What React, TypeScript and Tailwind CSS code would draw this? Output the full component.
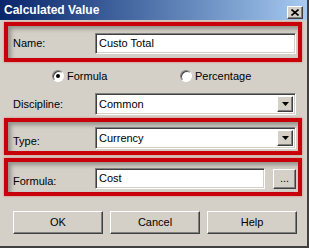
import { ReactNode } from "react";

const sunken =
  "bg-white border border-t-[#808080] border-l-[#808080] border-b-white border-r-white shadow-[inset_1px_1px_0_#404040,inset_-1px_-1px_0_#d4d0c8]";
const raised =
  "bg-[#d4d0c8] border border-t-white border-l-white border-b-[#404040] border-r-[#404040] shadow-[inset_-1px_-1px_0_#808080]";

const RedBox = ({ children, h }: { children: ReactNode; h: string }) => (
  <div
    className={`${h} border-4 border-[#c8000a] flex items-center pl-[5px] pr-[2px] pt-[3px] shadow-[inset_3px_3px_4px_rgba(0,0,0,0.3),0_0_2px_rgba(220,60,60,0.6)]`}
  >
    {children}
  </div>
);

const Select = ({ value }: { value: string }) => (
  <div className={`${sunken} w-[201px] h-[22px] flex items-center justify-between pl-[3px] pr-[2px]`}>
    <span>{value}</span>
    <div className={`${raised} w-[16px] h-[16px] flex items-center justify-center`}>
      <svg width="7" height="4" viewBox="0 0 7 4">
        <path d="M0 0h7L3.5 4z" fill="#000" />
      </svg>
    </div>
  </div>
);

const Radio = ({ checked, label, w }: { checked?: boolean; label: string; w: string }) => (
  <div className={`${w} flex items-center gap-[3px]`}>
    <div className="w-[12px] h-[12px] rounded-full bg-white border border-t-[#808080] border-l-[#808080] border-b-white border-r-white shadow-[inset_1px_1px_0_#404040] flex items-center justify-center">
      {checked && <div className="w-[4px] h-[4px] rounded-full bg-black" />}
    </div>
    <span>{label}</span>
  </div>
);

export default function App() {
  return (
    <div
      className="w-[309px] h-[248px] bg-[#d4d0c8] border-r-2 border-b-2 border-r-[#404040] border-b-[#404040] text-[11px] text-black flex flex-col overflow-hidden"
      style={{ fontFamily: "Tahoma, 'Liberation Sans', Arial, sans-serif" }}
    >
      {/* Title bar */}
      <div className="h-[20px] shrink-0 flex items-center justify-between pl-[4px] pr-[4px] bg-gradient-to-r from-[#0a246a] to-[#a6caf0]">
        <span className="text-white font-bold text-[12px]">Calculated Value</span>
        <div className={`${raised} w-[16px] h-[13px] mt-[5px] flex items-center justify-center`}>
          <svg width="8" height="7" viewBox="0 0 8 7">
            <path d="M0.5 0.5L7.5 6.5M7.5 0.5L0.5 6.5" stroke="#000" strokeWidth="1.6" />
          </svg>
        </div>
      </div>

      <div className="flex flex-col px-[4px] pr-[5px] pt-[2px]">
        <RedBox h="h-[40px]">
          <span className="w-[82px]">Name:</span>
          <div className={`${sunken} w-[201px] h-[21px] flex items-center pl-[3px]`}>Custo Total</div>
        </RedBox>

        <div className="h-[28px] flex items-center pl-[48px]">
          <Radio checked label="Formula" w="w-[128px]" />
          <Radio label="Percentage" w="w-[100px]" />
        </div>

        <div className="h-[28px] flex items-center pl-[9px] pr-[6px]">
          <span className="w-[82px]">Discipline:</span>
          <Select value="Common" />
        </div>

        <RedBox h="h-[37px]">
          <span className="w-[82px] mt-[6px]">Type:</span>
          <Select value="Currency" />
        </RedBox>

        <div className="mt-[3px]">
          <RedBox h="h-[38px]">
            <span className="w-[82px] mt-[6px]">Formula:</span>
            <div className={`${sunken} w-[170px] h-[21px] flex items-center pl-[3px]`}>Cost</div>
            <div className={`${raised} ml-[8px] w-[23px] h-[20px] flex items-center justify-center`}>...</div>
          </RedBox>
        </div>

        <div className="mt-[15px] flex pl-[9px] gap-[7px]">
          <button className={`${raised} w-[90px] h-[23px]`}>OK</button>
          <button className={`${raised} w-[90px] h-[23px]`}>Cancel</button>
          <button className={`${raised} w-[90px] h-[23px]`}>Help</button>
        </div>
      </div>
    </div>
  );
}
